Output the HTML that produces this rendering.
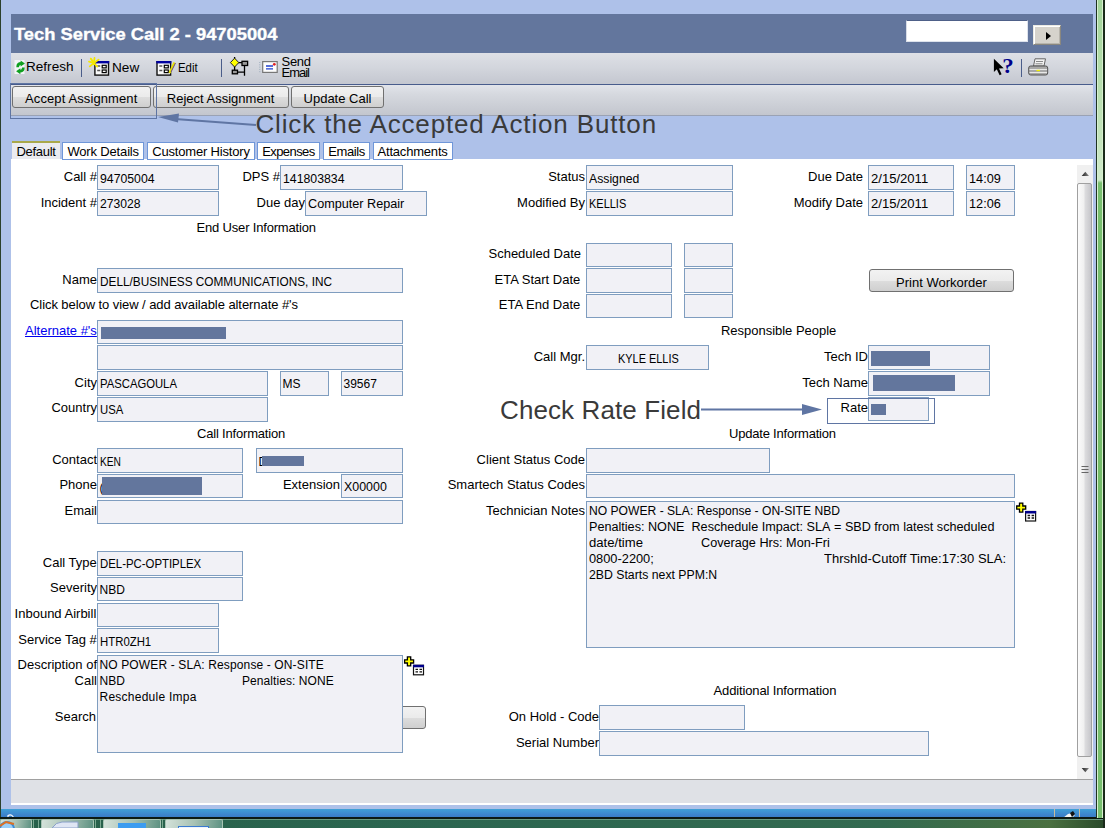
<!DOCTYPE html><html><head><meta charset="utf-8"><style>
html,body{margin:0;padding:0;}
body{width:1105px;height:828px;overflow:hidden;position:relative;background:#aec1e9;font-family:"Liberation Sans",sans-serif;}
</style></head><body>
<div style="position:absolute;left:0px;top:0px;width:1px;height:818px;background:#2b3f2b;"></div>
<div style="position:absolute;left:11px;top:14px;width:1082px;height:39px;background:#63769d;"></div>
<div style="position:absolute;left:14.00px;top:25.11px;line-height:20px;font-size:17px;font-family:'Liberation Sans',sans-serif;font-weight:bold;color:#fff;white-space:pre;letter-spacing:0.000px;transform:scaleX(1.0779);transform-origin:0 0;-webkit-text-stroke:0.35px #fff;">Tech Service Call 2 - 94705004</div>
<div style="position:absolute;left:906px;top:20px;width:122px;height:22px;box-sizing:border-box;background:#fff;border:1px solid #dde2ec;border-top-color:#4e6088;border-left-color:#d8dce6;"></div>
<div style="position:absolute;left:1033px;top:25px;width:28px;height:20px;box-sizing:border-box;background:#d6d3cc;border:1px solid #ecebe4;border-right-color:#8a877f;border-bottom-color:#8a877f;box-shadow:inset 1px 1px 0 #fff, inset -1px -1px 0 #b8b5ad;"></div>
<div style="position:absolute;left:1046px;top:32px;width:0;height:0;border-top:4px solid transparent;border-bottom:4px solid transparent;border-left:5px solid #000;"></div>
<div style="position:absolute;left:11px;top:53px;width:1082px;height:31px;background:linear-gradient(#dee0e6,#d2d5dc 50%,#c4c7d0);"></div>
<div style="position:absolute;left:11px;top:84px;width:1082px;height:1px;background:#485c8c;"></div>
<div style="position:absolute;left:11px;top:85px;width:1082px;height:30px;background:linear-gradient(#e2e4ea,#d6d9df 30%,#c3c6ce);"></div>
<div style="position:absolute;left:11px;top:115px;width:1082px;height:1px;background:#9aa2b4;"></div>
<div style="position:absolute;left:12px;top:86px;width:139px;height:22px;box-sizing:border-box;border:1px solid #707070;border-radius:3px;background:linear-gradient(#f2f2f2 0%,#ebebeb 50%,#dddddd 51%,#cfcfcf 100%);"></div>
<div style="position:absolute;left:25.00px;top:90.50px;line-height:16px;font-size:13px;font-family:'Liberation Sans',sans-serif;font-weight:normal;color:#000;white-space:pre;letter-spacing:0.108px;">Accept Assignment</div>
<div style="position:absolute;left:153px;top:86px;width:136px;height:22px;box-sizing:border-box;border:1px solid #707070;border-radius:3px;background:linear-gradient(#f2f2f2 0%,#ebebeb 50%,#dddddd 51%,#cfcfcf 100%);"></div>
<div style="position:absolute;left:166.81px;top:90.50px;line-height:16px;font-size:13px;font-family:'Liberation Sans',sans-serif;font-weight:normal;color:#000;white-space:pre;letter-spacing:0.000px;">Reject Assignment</div>
<div style="position:absolute;left:291px;top:86px;width:93px;height:22px;box-sizing:border-box;border:1px solid #707070;border-radius:3px;background:linear-gradient(#f2f2f2 0%,#ebebeb 50%,#dddddd 51%,#cfcfcf 100%);"></div>
<div style="position:absolute;left:303.54px;top:90.50px;line-height:16px;font-size:13px;font-family:'Liberation Sans',sans-serif;font-weight:normal;color:#000;white-space:pre;letter-spacing:0.000px;">Update Call</div>
<div style="position:absolute;left:10px;top:83px;width:147px;height:36px;box-sizing:border-box;border:1px solid #5f75a3;"></div>
<div style="position:absolute;left:255.50px;top:109.49px;line-height:31px;font-size:26px;font-family:'Liberation Sans',sans-serif;font-weight:normal;color:#3a3a3a;white-space:pre;letter-spacing:0.848px;">Click the Accepted Action Button</div>
<div style="position:absolute;left:12px;top:141px;width:48px;height:18px;box-sizing:border-box;border-top:2px solid #a9a84a;background:#ebebf0;"></div>
<div style="position:absolute;left:16.50px;top:143.50px;line-height:16px;font-size:13px;font-family:'Liberation Sans',sans-serif;font-weight:normal;color:#000;white-space:pre;letter-spacing:-0.298px;">Default</div>
<div style="position:absolute;left:11px;top:159px;width:1082px;height:620px;background:#fff;"></div>
<div style="position:absolute;left:62px;top:142px;width:82px;height:18px;box-sizing:border-box;border:1px solid #6f96d8;background:#fff;"></div>
<div style="position:absolute;left:67.40px;top:143.50px;line-height:16px;font-size:13px;font-family:'Liberation Sans',sans-serif;font-weight:normal;color:#000;white-space:pre;letter-spacing:-0.158px;">Work Details</div>
<div style="position:absolute;left:147px;top:142px;width:107.5px;height:18px;box-sizing:border-box;border:1px solid #6f96d8;background:#fff;"></div>
<div style="position:absolute;left:152.20px;top:143.50px;line-height:16px;font-size:13px;font-family:'Liberation Sans',sans-serif;font-weight:normal;color:#000;white-space:pre;letter-spacing:-0.174px;">Customer History</div>
<div style="position:absolute;left:257px;top:142px;width:63px;height:18px;box-sizing:border-box;border:1px solid #6f96d8;background:#fff;"></div>
<div style="position:absolute;left:262.20px;top:143.50px;line-height:16px;font-size:13px;font-family:'Liberation Sans',sans-serif;font-weight:normal;color:#000;white-space:pre;letter-spacing:-0.584px;">Expenses</div>
<div style="position:absolute;left:323px;top:142px;width:47px;height:18px;box-sizing:border-box;border:1px solid #6f96d8;background:#fff;"></div>
<div style="position:absolute;left:328.20px;top:143.50px;line-height:16px;font-size:13px;font-family:'Liberation Sans',sans-serif;font-weight:normal;color:#000;white-space:pre;letter-spacing:-0.381px;">Emails</div>
<div style="position:absolute;left:372.5px;top:142px;width:80.5px;height:18px;box-sizing:border-box;border:1px solid #6f96d8;background:#fff;"></div>
<div style="position:absolute;left:377.50px;top:143.50px;line-height:16px;font-size:13px;font-family:'Liberation Sans',sans-serif;font-weight:normal;color:#000;white-space:pre;letter-spacing:-0.196px;">Attachments</div>
<div style="position:absolute;left:1077px;top:165px;width:16px;height:614px;background:#f0f0f0;"></div>
<div style="position:absolute;left:1077px;top:183px;width:15px;height:574px;box-sizing:border-box;border:1px solid #a0a0a0;border-radius:2px;background:linear-gradient(90deg,#fbfbfb,#f0f0f0 45%,#dcdcde 55%,#c6c6ca);"></div>
<svg style="position:absolute;left:0;top:0" width="1105" height="828"><defs><linearGradient id="ag" x1="0" x2="1"><stop offset="0" stop-color="#222"/><stop offset="1" stop-color="#888"/></linearGradient></defs><path d="M1081.7 176 L1085.3 171.8 L1089 176 Z" fill="url(#ag)"/><path d="M1081.7 768 L1085.3 772.2 L1089 768 Z" fill="url(#ag)"/><path d="M1081.5 466.5 H1088.5 M1081.5 469.5 H1088.5 M1081.5 472.5 H1088.5" stroke="#666" stroke-width="1.2"/></svg>
<div style="position:absolute;left:11px;top:779px;width:1082px;height:1px;background:#a0a0a0;"></div>
<div style="position:absolute;left:11px;top:780px;width:1082px;height:23px;background:#dfe1e6;"></div>
<div style="position:absolute;left:11px;top:803px;width:1082px;height:2px;background:#fff;"></div>
<div style="position:absolute;left:1px;top:809px;width:1095px;height:9px;background:linear-gradient(#40a0d6,#3c86cc 60%,#3a78c2);"></div>
<div style="position:absolute;left:1054px;top:809px;width:1px;height:9px;background:#c8bc9c;"></div>
<div style="position:absolute;left:1079px;top:809px;width:1px;height:9px;background:#c8bc9c;"></div>
<svg style="position:absolute;left:0;top:0" width="1105" height="828"><path d="M1063 818 L1068 814 L1072 813 L1075 815 L1072 818 Z" fill="#f4f4f4"/><path d="M1070 813 L1073 811 L1075 814 L1072 817 Z" fill="#111"/><path d="M8 818 V815.5 Q11 814 13 816.5 V818" stroke="#fff" stroke-width="1.2" fill="none"/></svg>
<div style="position:absolute;left:0px;top:817px;width:1105px;height:2px;background:#0c1a12;"></div>
<div style="position:absolute;left:0px;top:819px;width:1105px;height:9px;background:linear-gradient(90deg,#27604a,#2c6650 40%,#336a50 80%,#4a7040 95%,#2a4a2a);"></div>
<div style="position:absolute;left:0px;top:819px;width:1105px;height:1px;background:#6a9a80;"></div>
<div style="position:absolute;left:0px;top:819px;width:32px;height:9px;box-sizing:border-box;border:1px solid #a8c4b4;border-bottom:none;border-radius:2px 2px 0 0;background:linear-gradient(100deg,#d4e2da,#a8c2b4 50%,#5e9282);"></div>
<div style="position:absolute;left:41px;top:819px;width:53px;height:9px;box-sizing:border-box;border:1px solid #a8c4b4;border-bottom:none;border-radius:2px 2px 0 0;background:linear-gradient(100deg,#d4e2da,#a8c2b4 50%,#5e9282);"></div>
<div style="position:absolute;left:103px;top:819px;width:58px;height:9px;box-sizing:border-box;border:1px solid #a8c4b4;border-bottom:none;border-radius:2px 2px 0 0;background:linear-gradient(100deg,#d4e2da,#a8c2b4 50%,#5e9282);"></div>
<div style="position:absolute;left:165px;top:819px;width:58px;height:9px;box-sizing:border-box;border:1px solid #a8c4b4;border-bottom:none;border-radius:2px 2px 0 0;background:linear-gradient(100deg,#d4e2da,#a8c2b4 50%,#5e9282);"></div>
<div style="position:absolute;left:33px;top:819px;width:1px;height:9px;background:#7aa890;"></div>
<div style="position:absolute;left:38px;top:819px;width:1px;height:9px;background:#7aa890;"></div>
<div style="position:absolute;left:95px;top:819px;width:1px;height:9px;background:#7aa890;"></div>
<div style="position:absolute;left:100px;top:819px;width:1px;height:9px;background:#7aa890;"></div>
<div style="position:absolute;left:162px;top:819px;width:1px;height:9px;background:#7aa890;"></div>
<svg style="position:absolute;left:0;top:0" width="1105" height="828"><circle cx="7" cy="829" r="8" fill="#3a8ad8"/><circle cx="7" cy="829" r="6" fill="#9ad0f8"/><path d="M0 826 L6 822 L14 824" stroke="#e07020" stroke-width="2" fill="none"/><path d="M52 828 Q56 822 62 822 H78 V828 Z" fill="#dfe6f4" stroke="#8aa0c8" stroke-width="1"/><rect x="118" y="823" width="28" height="6" fill="#3c9cf0"/><rect x="178.5" y="826.5" width="30" height="3" fill="#eef4fa" stroke="#3a7ad0" stroke-width="1"/></svg>
<div style="position:absolute;left:1096px;top:0px;width:1px;height:818px;background:#1d3320;"></div>
<div style="position:absolute;left:1097px;top:0px;width:1px;height:818px;background:#d8f0d0;"></div>
<div style="position:absolute;left:1098px;top:0px;width:4px;height:818px;background:linear-gradient(#a2d49a,#c4e4bc 140px,#d0eacb 180px,#78c070 183px,#74bc6a 60%,#78c070);"></div>
<div style="position:absolute;left:1102px;top:0px;width:1px;height:818px;background:#d8f0d0;"></div>
<div style="position:absolute;left:1103px;top:0px;width:2px;height:828px;background:#1a2a1a;"></div>
<div style="position:absolute;left:63.76px;top:168.50px;line-height:16px;font-size:13px;font-family:'Liberation Sans',sans-serif;font-weight:normal;color:#000;white-space:pre;letter-spacing:0.000px;">Call #</div>
<div style="position:absolute;left:97px;top:165px;width:122px;height:25px;box-sizing:border-box;border:1px solid #7f9dbf;background:#f1f1f6;"></div>
<div style="position:absolute;left:99.50px;top:171.84px;line-height:14px;font-size:12px;font-family:'Liberation Sans',sans-serif;font-weight:normal;color:#000;white-space:pre;letter-spacing:0.000px;transform:scaleX(1.0208);transform-origin:0 0;">94705004</div>
<div style="position:absolute;left:40.63px;top:194.50px;line-height:16px;font-size:13px;font-family:'Liberation Sans',sans-serif;font-weight:normal;color:#000;white-space:pre;letter-spacing:0.000px;">Incident #</div>
<div style="position:absolute;left:97px;top:191px;width:122px;height:25px;box-sizing:border-box;border:1px solid #7f9dbf;background:#f1f1f6;"></div>
<div style="position:absolute;left:99.50px;top:196.84px;line-height:14px;font-size:12px;font-family:'Liberation Sans',sans-serif;font-weight:normal;color:#000;white-space:pre;letter-spacing:0.000px;transform:scaleX(1.0114);transform-origin:0 0;">273028</div>
<div style="position:absolute;left:242.43px;top:168.50px;line-height:16px;font-size:13px;font-family:'Liberation Sans',sans-serif;font-weight:normal;color:#000;white-space:pre;letter-spacing:0.000px;">DPS #</div>
<div style="position:absolute;left:280px;top:165px;width:123px;height:25px;box-sizing:border-box;border:1px solid #7f9dbf;background:#f1f1f6;"></div>
<div style="position:absolute;left:282.50px;top:171.84px;line-height:14px;font-size:12px;font-family:'Liberation Sans',sans-serif;font-weight:normal;color:#000;white-space:pre;letter-spacing:0.000px;transform:scaleX(1.0239);transform-origin:0 0;">141803834</div>
<div style="position:absolute;left:256.58px;top:194.50px;line-height:16px;font-size:13px;font-family:'Liberation Sans',sans-serif;font-weight:normal;color:#000;white-space:pre;letter-spacing:0.000px;">Due day</div>
<div style="position:absolute;left:305px;top:191px;width:122px;height:25px;box-sizing:border-box;border:1px solid #7f9dbf;background:#f1f1f6;"></div>
<div style="position:absolute;left:307.50px;top:196.84px;line-height:14px;font-size:12px;font-family:'Liberation Sans',sans-serif;font-weight:normal;color:#000;white-space:pre;letter-spacing:0.000px;transform:scaleX(1.0539);transform-origin:0 0;">Computer Repair</div>
<div style="position:absolute;left:196.50px;top:219.50px;line-height:16px;font-size:13px;font-family:'Liberation Sans',sans-serif;font-weight:normal;color:#000;white-space:pre;letter-spacing:-0.175px;">End User Information</div>
<div style="position:absolute;left:62.32px;top:271.50px;line-height:16px;font-size:13px;font-family:'Liberation Sans',sans-serif;font-weight:normal;color:#000;white-space:pre;letter-spacing:0.000px;">Name</div>
<div style="position:absolute;left:97px;top:268px;width:306px;height:25px;box-sizing:border-box;border:1px solid #7f9dbf;background:#f1f1f6;"></div>
<div style="position:absolute;left:99.50px;top:274.84px;line-height:14px;font-size:12px;font-family:'Liberation Sans',sans-serif;font-weight:normal;color:#000;white-space:pre;letter-spacing:0.000px;transform:scaleX(0.9838);transform-origin:0 0;">DELL/BUSINESS COMMUNICATIONS, INC</div>
<div style="position:absolute;left:30.00px;top:296.50px;line-height:16px;font-size:13px;font-family:'Liberation Sans',sans-serif;font-weight:normal;color:#000;white-space:pre;letter-spacing:-0.069px;">Click below to view / add available alternate #'s</div>
<div style="position:absolute;left:25.00px;top:322.50px;line-height:16px;font-size:13px;font-family:'Liberation Sans',sans-serif;font-weight:normal;color:#0000ee;white-space:pre;letter-spacing:0.000px;text-decoration:underline;">Alternate #'s</div>
<div style="position:absolute;left:97px;top:320px;width:306px;height:24px;box-sizing:border-box;border:1px solid #7f9dbf;background:#f1f1f6;"></div>
<div style="position:absolute;left:100.5px;top:327px;width:125.5px;height:12px;background:#63769d;"></div>
<div style="position:absolute;left:97px;top:345px;width:306px;height:25px;box-sizing:border-box;border:1px solid #7f9dbf;background:#f1f1f6;"></div>
<div style="position:absolute;left:74.61px;top:374.50px;line-height:16px;font-size:13px;font-family:'Liberation Sans',sans-serif;font-weight:normal;color:#000;white-space:pre;letter-spacing:0.000px;">City</div>
<div style="position:absolute;left:97px;top:371px;width:171px;height:25px;box-sizing:border-box;border:1px solid #7f9dbf;background:#f1f1f6;"></div>
<div style="position:absolute;left:99.50px;top:376.84px;line-height:14px;font-size:12px;font-family:'Liberation Sans',sans-serif;font-weight:normal;color:#000;white-space:pre;letter-spacing:0.000px;transform:scaleX(0.9401);transform-origin:0 0;">PASCAGOULA</div>
<div style="position:absolute;left:280px;top:371px;width:49px;height:25px;box-sizing:border-box;border:1px solid #7f9dbf;background:#f1f1f6;"></div>
<div style="position:absolute;left:282.50px;top:376.84px;line-height:14px;font-size:12px;font-family:'Liberation Sans',sans-serif;font-weight:normal;color:#000;white-space:pre;letter-spacing:0.000px;">MS</div>
<div style="position:absolute;left:341px;top:371px;width:62px;height:25px;box-sizing:border-box;border:1px solid #7f9dbf;background:#f1f1f6;"></div>
<div style="position:absolute;left:343.50px;top:376.84px;line-height:14px;font-size:12px;font-family:'Liberation Sans',sans-serif;font-weight:normal;color:#000;white-space:pre;letter-spacing:0.000px;">39567</div>
<div style="position:absolute;left:51.48px;top:399.50px;line-height:16px;font-size:13px;font-family:'Liberation Sans',sans-serif;font-weight:normal;color:#000;white-space:pre;letter-spacing:0.000px;">Country</div>
<div style="position:absolute;left:97px;top:397px;width:171px;height:25px;box-sizing:border-box;border:1px solid #7f9dbf;background:#f1f1f6;"></div>
<div style="position:absolute;left:99.50px;top:402.84px;line-height:14px;font-size:12px;font-family:'Liberation Sans',sans-serif;font-weight:normal;color:#000;white-space:pre;letter-spacing:0.000px;transform:scaleX(0.9443);transform-origin:0 0;">USA</div>
<div style="position:absolute;left:197.00px;top:425.50px;line-height:16px;font-size:13px;font-family:'Liberation Sans',sans-serif;font-weight:normal;color:#000;white-space:pre;letter-spacing:-0.189px;">Call Information</div>
<div style="position:absolute;left:52.20px;top:451.50px;line-height:16px;font-size:13px;font-family:'Liberation Sans',sans-serif;font-weight:normal;color:#000;white-space:pre;letter-spacing:0.000px;">Contact</div>
<div style="position:absolute;left:97px;top:448px;width:146px;height:25px;box-sizing:border-box;border:1px solid #7f9dbf;background:#f1f1f6;"></div>
<div style="position:absolute;left:99.50px;top:454.84px;line-height:14px;font-size:12px;font-family:'Liberation Sans',sans-serif;font-weight:normal;color:#000;white-space:pre;letter-spacing:0.000px;transform:scaleX(0.8511);transform-origin:0 0;">KEN</div>
<div style="position:absolute;left:256px;top:448px;width:147px;height:25px;box-sizing:border-box;border:1px solid #7f9dbf;background:#f1f1f6;"></div>
<div style="position:absolute;left:258.50px;top:454.84px;line-height:14px;font-size:12px;font-family:'Liberation Sans',sans-serif;font-weight:normal;color:#000;white-space:pre;letter-spacing:0.000px;">D</div>
<div style="position:absolute;left:261.5px;top:456px;width:42.5px;height:10px;background:#63769d;"></div>
<div style="position:absolute;left:59.41px;top:476.50px;line-height:16px;font-size:13px;font-family:'Liberation Sans',sans-serif;font-weight:normal;color:#000;white-space:pre;letter-spacing:0.000px;">Phone</div>
<div style="position:absolute;left:97px;top:474px;width:146px;height:24px;box-sizing:border-box;border:1px solid #7f9dbf;background:#f1f1f6;"></div>
<div style="position:absolute;left:99.50px;top:480.84px;line-height:14px;font-size:12px;font-family:'Liberation Sans',sans-serif;font-weight:normal;color:#000;white-space:pre;letter-spacing:0.000px;">(</div>
<div style="position:absolute;left:102px;top:477px;width:100px;height:18px;background:#63769d;"></div>
<div style="position:absolute;left:282.91px;top:476.50px;line-height:16px;font-size:13px;font-family:'Liberation Sans',sans-serif;font-weight:normal;color:#000;white-space:pre;letter-spacing:0.000px;">Extension</div>
<div style="position:absolute;left:341px;top:474px;width:62px;height:24px;box-sizing:border-box;border:1px solid #7f9dbf;background:#f1f1f6;"></div>
<div style="position:absolute;left:343.50px;top:479.84px;line-height:14px;font-size:12px;font-family:'Liberation Sans',sans-serif;font-weight:normal;color:#000;white-space:pre;letter-spacing:0.000px;transform:scaleX(1.0345);transform-origin:0 0;">X00000</div>
<div style="position:absolute;left:64.49px;top:502.50px;line-height:16px;font-size:13px;font-family:'Liberation Sans',sans-serif;font-weight:normal;color:#000;white-space:pre;letter-spacing:0.000px;">Email</div>
<div style="position:absolute;left:97px;top:500px;width:306px;height:24px;box-sizing:border-box;border:1px solid #7f9dbf;background:#f1f1f6;"></div>
<div style="position:absolute;left:42.81px;top:554.50px;line-height:16px;font-size:13px;font-family:'Liberation Sans',sans-serif;font-weight:normal;color:#000;white-space:pre;letter-spacing:0.000px;">Call Type</div>
<div style="position:absolute;left:97px;top:551px;width:146px;height:25px;box-sizing:border-box;border:1px solid #7f9dbf;background:#f1f1f6;"></div>
<div style="position:absolute;left:99.50px;top:556.84px;line-height:14px;font-size:12px;font-family:'Liberation Sans',sans-serif;font-weight:normal;color:#000;white-space:pre;letter-spacing:0.000px;transform:scaleX(0.9485);transform-origin:0 0;">DEL-PC-OPTIPLEX</div>
<div style="position:absolute;left:50.04px;top:579.50px;line-height:16px;font-size:13px;font-family:'Liberation Sans',sans-serif;font-weight:normal;color:#000;white-space:pre;letter-spacing:0.000px;">Severity</div>
<div style="position:absolute;left:97px;top:577px;width:146px;height:24px;box-sizing:border-box;border:1px solid #7f9dbf;background:#f1f1f6;"></div>
<div style="position:absolute;left:99.50px;top:582.84px;line-height:14px;font-size:12px;font-family:'Liberation Sans',sans-serif;font-weight:normal;color:#000;white-space:pre;letter-spacing:0.000px;">NBD</div>
<div style="position:absolute;left:14.61px;top:605.50px;line-height:16px;font-size:13px;font-family:'Liberation Sans',sans-serif;font-weight:normal;color:#000;white-space:pre;letter-spacing:0.000px;">Inbound Airbill</div>
<div style="position:absolute;left:97px;top:603px;width:122px;height:24px;box-sizing:border-box;border:1px solid #7f9dbf;background:#f1f1f6;"></div>
<div style="position:absolute;left:18.24px;top:631.50px;line-height:16px;font-size:13px;font-family:'Liberation Sans',sans-serif;font-weight:normal;color:#000;white-space:pre;letter-spacing:0.000px;">Service Tag #</div>
<div style="position:absolute;left:97px;top:628px;width:122px;height:25px;box-sizing:border-box;border:1px solid #7f9dbf;background:#f1f1f6;"></div>
<div style="position:absolute;left:99.50px;top:634.84px;line-height:14px;font-size:12px;font-family:'Liberation Sans',sans-serif;font-weight:normal;color:#000;white-space:pre;letter-spacing:0.000px;transform:scaleX(0.9480);transform-origin:0 0;">HTR0ZH1</div>
<div style="position:absolute;left:380px;top:706px;width:46px;height:23px;box-sizing:border-box;border:1px solid #707070;border-radius:3px;background:linear-gradient(#f2f2f2 0%,#ebebeb 50%,#dddddd 51%,#cfcfcf 100%);"></div>
<div style="position:absolute;left:403.00px;top:710.50px;line-height:16px;font-size:13px;font-family:'Liberation Sans',sans-serif;font-weight:normal;color:#000;white-space:pre;letter-spacing:0.000px;"></div>
<div style="position:absolute;left:97px;top:655px;width:306px;height:98px;box-sizing:border-box;border:1px solid #7f9dbf;background:#f1f1f6;"></div>
<div style="position:absolute;left:99.50px;top:657.84px;line-height:14px;font-size:12px;font-family:'Liberation Sans',sans-serif;font-weight:normal;color:#000;white-space:pre;letter-spacing:0.129px;">NO POWER - SLA: Response - ON-SITE</div>
<div style="position:absolute;left:99.50px;top:673.84px;line-height:14px;font-size:12px;font-family:'Liberation Sans',sans-serif;font-weight:normal;color:#000;white-space:pre;letter-spacing:0.000px;">NBD</div>
<div style="position:absolute;left:242.00px;top:673.84px;line-height:14px;font-size:12px;font-family:'Liberation Sans',sans-serif;font-weight:normal;color:#000;white-space:pre;letter-spacing:0.071px;">Penalties: NONE</div>
<div style="position:absolute;left:99.50px;top:689.84px;line-height:14px;font-size:12px;font-family:'Liberation Sans',sans-serif;font-weight:normal;color:#000;white-space:pre;letter-spacing:0.244px;">Reschedule Impa</div>
<div style="position:absolute;left:17.52px;top:656.50px;line-height:16px;font-size:13px;font-family:'Liberation Sans',sans-serif;font-weight:normal;color:#000;white-space:pre;letter-spacing:0.000px;">Description of</div>
<div style="position:absolute;left:74.61px;top:672.50px;line-height:16px;font-size:13px;font-family:'Liberation Sans',sans-serif;font-weight:normal;color:#000;white-space:pre;letter-spacing:0.000px;">Call</div>
<div style="position:absolute;left:54.81px;top:708.50px;line-height:16px;font-size:13px;font-family:'Liberation Sans',sans-serif;font-weight:normal;color:#000;white-space:pre;letter-spacing:0.000px;">Search</div>
<div style="position:absolute;left:548.15px;top:168.50px;line-height:16px;font-size:13px;font-family:'Liberation Sans',sans-serif;font-weight:normal;color:#000;white-space:pre;letter-spacing:0.000px;">Status</div>
<div style="position:absolute;left:586px;top:165px;width:147px;height:25px;box-sizing:border-box;border:1px solid #7f9dbf;background:#f1f1f6;"></div>
<div style="position:absolute;left:588.50px;top:171.84px;line-height:14px;font-size:12px;font-family:'Liberation Sans',sans-serif;font-weight:normal;color:#000;white-space:pre;letter-spacing:0.000px;transform:scaleX(1.0189);transform-origin:0 0;">Assigned</div>
<div style="position:absolute;left:517.08px;top:194.50px;line-height:16px;font-size:13px;font-family:'Liberation Sans',sans-serif;font-weight:normal;color:#000;white-space:pre;letter-spacing:0.000px;">Modified By</div>
<div style="position:absolute;left:586px;top:191px;width:147px;height:25px;box-sizing:border-box;border:1px solid #7f9dbf;background:#f1f1f6;"></div>
<div style="position:absolute;left:588.50px;top:196.84px;line-height:14px;font-size:12px;font-family:'Liberation Sans',sans-serif;font-weight:normal;color:#000;white-space:pre;letter-spacing:0.000px;transform:scaleX(0.9142);transform-origin:0 0;">KELLIS</div>
<div style="position:absolute;left:808.08px;top:168.50px;line-height:16px;font-size:13px;font-family:'Liberation Sans',sans-serif;font-weight:normal;color:#000;white-space:pre;letter-spacing:0.000px;">Due Date</div>
<div style="position:absolute;left:868px;top:165px;width:86px;height:25px;box-sizing:border-box;border:1px solid #7f9dbf;background:#f1f1f6;"></div>
<div style="position:absolute;left:870.50px;top:171.84px;line-height:14px;font-size:12px;font-family:'Liberation Sans',sans-serif;font-weight:normal;color:#000;white-space:pre;letter-spacing:0.000px;transform:scaleX(1.0896);transform-origin:0 0;">2/15/2011</div>
<div style="position:absolute;left:966px;top:165px;width:49px;height:25px;box-sizing:border-box;border:1px solid #7f9dbf;background:#f1f1f6;"></div>
<div style="position:absolute;left:968.50px;top:171.84px;line-height:14px;font-size:12px;font-family:'Liberation Sans',sans-serif;font-weight:normal;color:#000;white-space:pre;letter-spacing:0.000px;transform:scaleX(1.0590);transform-origin:0 0;">14:09</div>
<div style="position:absolute;left:793.64px;top:194.50px;line-height:16px;font-size:13px;font-family:'Liberation Sans',sans-serif;font-weight:normal;color:#000;white-space:pre;letter-spacing:0.000px;">Modify Date</div>
<div style="position:absolute;left:868px;top:191px;width:86px;height:25px;box-sizing:border-box;border:1px solid #7f9dbf;background:#f1f1f6;"></div>
<div style="position:absolute;left:870.50px;top:196.84px;line-height:14px;font-size:12px;font-family:'Liberation Sans',sans-serif;font-weight:normal;color:#000;white-space:pre;letter-spacing:0.000px;transform:scaleX(1.0896);transform-origin:0 0;">2/15/2011</div>
<div style="position:absolute;left:966px;top:191px;width:49px;height:25px;box-sizing:border-box;border:1px solid #7f9dbf;background:#f1f1f6;"></div>
<div style="position:absolute;left:968.50px;top:196.84px;line-height:14px;font-size:12px;font-family:'Liberation Sans',sans-serif;font-weight:normal;color:#000;white-space:pre;letter-spacing:0.000px;transform:scaleX(1.0590);transform-origin:0 0;">12:06</div>
<div style="position:absolute;left:488.49px;top:245.50px;line-height:16px;font-size:13px;font-family:'Liberation Sans',sans-serif;font-weight:normal;color:#000;white-space:pre;letter-spacing:0.000px;">Scheduled Date</div>
<div style="position:absolute;left:586px;top:243px;width:86px;height:24px;box-sizing:border-box;border:1px solid #7f9dbf;background:#f1f1f6;"></div>
<div style="position:absolute;left:684px;top:243px;width:49px;height:24px;box-sizing:border-box;border:1px solid #7f9dbf;background:#f1f1f6;"></div>
<div style="position:absolute;left:494.54px;top:271.50px;line-height:16px;font-size:13px;font-family:'Liberation Sans',sans-serif;font-weight:normal;color:#000;white-space:pre;letter-spacing:0.000px;">ETA Start Date</div>
<div style="position:absolute;left:586px;top:268px;width:86px;height:25px;box-sizing:border-box;border:1px solid #7f9dbf;background:#f1f1f6;"></div>
<div style="position:absolute;left:684px;top:268px;width:49px;height:25px;box-sizing:border-box;border:1px solid #7f9dbf;background:#f1f1f6;"></div>
<div style="position:absolute;left:498.87px;top:296.50px;line-height:16px;font-size:13px;font-family:'Liberation Sans',sans-serif;font-weight:normal;color:#000;white-space:pre;letter-spacing:0.000px;">ETA End Date</div>
<div style="position:absolute;left:586px;top:294px;width:86px;height:24px;box-sizing:border-box;border:1px solid #7f9dbf;background:#f1f1f6;"></div>
<div style="position:absolute;left:684px;top:294px;width:49px;height:24px;box-sizing:border-box;border:1px solid #7f9dbf;background:#f1f1f6;"></div>
<div style="position:absolute;left:869px;top:269px;width:145px;height:23px;box-sizing:border-box;border:1px solid #707070;border-radius:3px;background:linear-gradient(#f2f2f2 0%,#ebebeb 50%,#dddddd 51%,#cfcfcf 100%);"></div>
<div style="position:absolute;left:896.11px;top:274.50px;line-height:16px;font-size:13px;font-family:'Liberation Sans',sans-serif;font-weight:normal;color:#000;white-space:pre;letter-spacing:0.000px;">Print Workorder</div>
<div style="position:absolute;left:721.00px;top:322.50px;line-height:16px;font-size:13px;font-family:'Liberation Sans',sans-serif;font-weight:normal;color:#000;white-space:pre;letter-spacing:-0.020px;">Responsible People</div>
<div style="position:absolute;left:533.71px;top:348.50px;line-height:16px;font-size:13px;font-family:'Liberation Sans',sans-serif;font-weight:normal;color:#000;white-space:pre;letter-spacing:0.000px;">Call Mgr.</div>
<div style="position:absolute;left:586px;top:345px;width:123px;height:25px;box-sizing:border-box;border:1px solid #7f9dbf;background:#f1f1f6;"></div>
<div style="position:absolute;left:617.70px;top:351.84px;line-height:14px;font-size:12px;font-family:'Liberation Sans',sans-serif;font-weight:normal;color:#000;white-space:pre;letter-spacing:0.000px;transform:scaleX(0.9099);transform-origin:0 0;">KYLE ELLIS</div>
<div style="position:absolute;left:823.93px;top:348.50px;line-height:16px;font-size:13px;font-family:'Liberation Sans',sans-serif;font-weight:normal;color:#000;white-space:pre;letter-spacing:0.000px;">Tech ID</div>
<div style="position:absolute;left:868px;top:345px;width:122px;height:25px;box-sizing:border-box;border:1px solid #7f9dbf;background:#f1f1f6;"></div>
<div style="position:absolute;left:870.5px;top:351px;width:59.0px;height:15px;background:#63769d;"></div>
<div style="position:absolute;left:802.25px;top:374.50px;line-height:16px;font-size:13px;font-family:'Liberation Sans',sans-serif;font-weight:normal;color:#000;white-space:pre;letter-spacing:0.000px;">Tech Name</div>
<div style="position:absolute;left:868px;top:371px;width:122px;height:25px;box-sizing:border-box;border:1px solid #7f9dbf;background:#f1f1f6;"></div>
<div style="position:absolute;left:872.5px;top:375px;width:82.5px;height:16px;background:#63769d;"></div>
<div style="position:absolute;left:840.54px;top:399.50px;line-height:16px;font-size:13px;font-family:'Liberation Sans',sans-serif;font-weight:normal;color:#000;white-space:pre;letter-spacing:0.000px;">Rate</div>
<div style="position:absolute;left:868px;top:397px;width:61px;height:24px;box-sizing:border-box;border:1px solid #7f9dbf;background:#f1f1f6;"></div>
<div style="position:absolute;left:870.5px;top:404px;width:15.5px;height:11px;background:#63769d;"></div>
<div style="position:absolute;left:827px;top:398px;width:108px;height:26px;box-sizing:border-box;border:1px solid #5f75a3;"></div>
<div style="position:absolute;left:500.00px;top:395.49px;line-height:31px;font-size:26px;font-family:'Liberation Sans',sans-serif;font-weight:normal;color:#3a3a3a;white-space:pre;letter-spacing:0.105px;">Check Rate Field</div>
<div style="position:absolute;left:729.00px;top:425.50px;line-height:16px;font-size:13px;font-family:'Liberation Sans',sans-serif;font-weight:normal;color:#000;white-space:pre;letter-spacing:-0.210px;">Update Information</div>
<div style="position:absolute;left:476.61px;top:451.50px;line-height:16px;font-size:13px;font-family:'Liberation Sans',sans-serif;font-weight:normal;color:#000;white-space:pre;letter-spacing:0.000px;">Client Status Code</div>
<div style="position:absolute;left:586px;top:448px;width:184px;height:25px;box-sizing:border-box;border:1px solid #7f9dbf;background:#f1f1f6;"></div>
<div style="position:absolute;left:447.71px;top:476.50px;line-height:16px;font-size:13px;font-family:'Liberation Sans',sans-serif;font-weight:normal;color:#000;white-space:pre;letter-spacing:0.000px;">Smartech Status Codes</div>
<div style="position:absolute;left:586px;top:474px;width:429px;height:24px;box-sizing:border-box;border:1px solid #7f9dbf;background:#f1f1f6;"></div>
<div style="position:absolute;left:486.00px;top:502.50px;line-height:16px;font-size:13px;font-family:'Liberation Sans',sans-serif;font-weight:normal;color:#000;white-space:pre;letter-spacing:0.000px;">Technician Notes</div>
<div style="position:absolute;left:586px;top:501px;width:429px;height:147px;box-sizing:border-box;border:1px solid #7f9dbf;background:#f1f1f6;"></div>
<div style="position:absolute;left:589.30px;top:503.84px;line-height:14px;font-size:12px;font-family:'Liberation Sans',sans-serif;font-weight:normal;color:#000;white-space:pre;letter-spacing:0.000px;transform:scaleX(1.0092);transform-origin:0 0;">NO POWER - SLA: Response - ON-SITE NBD</div>
<div style="position:absolute;left:589.30px;top:519.84px;line-height:14px;font-size:12px;font-family:'Liberation Sans',sans-serif;font-weight:normal;color:#000;white-space:pre;letter-spacing:0.000px;transform:scaleX(1.0525);transform-origin:0 0;">Penalties:&nbsp;NONE&nbsp;&nbsp;Reschedule&nbsp;Impact:&nbsp;SLA&nbsp;=&nbsp;SBD&nbsp;from&nbsp;latest&nbsp;scheduled</div>
<div style="position:absolute;left:589.30px;top:535.84px;line-height:14px;font-size:12px;font-family:'Liberation Sans',sans-serif;font-weight:normal;color:#000;white-space:pre;letter-spacing:0.000px;transform:scaleX(1.0940);transform-origin:0 0;">date/time</div>
<div style="position:absolute;left:700.50px;top:535.84px;line-height:14px;font-size:12px;font-family:'Liberation Sans',sans-serif;font-weight:normal;color:#000;white-space:pre;letter-spacing:0.000px;transform:scaleX(1.0547);transform-origin:0 0;">Coverage Hrs: Mon-Fri</div>
<div style="position:absolute;left:589.30px;top:551.84px;line-height:14px;font-size:12px;font-family:'Liberation Sans',sans-serif;font-weight:normal;color:#000;white-space:pre;letter-spacing:0.000px;transform:scaleX(1.0672);transform-origin:0 0;">0800-2200;</div>
<div style="position:absolute;left:823.60px;top:551.84px;line-height:14px;font-size:12px;font-family:'Liberation Sans',sans-serif;font-weight:normal;color:#000;white-space:pre;letter-spacing:0.000px;transform:scaleX(1.0852);transform-origin:0 0;">Thrshld-Cutoff Time:17:30 SLA:</div>
<div style="position:absolute;left:589.30px;top:567.84px;line-height:14px;font-size:12px;font-family:'Liberation Sans',sans-serif;font-weight:normal;color:#000;white-space:pre;letter-spacing:0.000px;transform:scaleX(1.0225);transform-origin:0 0;">2BD Starts next PPM:N</div>
<div style="position:absolute;left:713.60px;top:682.50px;line-height:16px;font-size:13px;font-family:'Liberation Sans',sans-serif;font-weight:normal;color:#000;white-space:pre;letter-spacing:-0.140px;">Additional Information</div>
<div style="position:absolute;left:508.68px;top:708.50px;line-height:16px;font-size:13px;font-family:'Liberation Sans',sans-serif;font-weight:normal;color:#000;white-space:pre;letter-spacing:0.000px;">On Hold - Code</div>
<div style="position:absolute;left:599px;top:705px;width:146px;height:25px;box-sizing:border-box;border:1px solid #7f9dbf;background:#f1f1f6;"></div>
<div style="position:absolute;left:515.92px;top:734.50px;line-height:16px;font-size:13px;font-family:'Liberation Sans',sans-serif;font-weight:normal;color:#000;white-space:pre;letter-spacing:0.000px;">Serial Number</div>
<div style="position:absolute;left:599px;top:731px;width:330px;height:25px;box-sizing:border-box;border:1px solid #7f9dbf;background:#f1f1f6;"></div>
<div style="position:absolute;left:25.50px;top:59.32px;line-height:16px;font-size:13.5px;font-family:'Liberation Sans',sans-serif;font-weight:normal;color:#000;white-space:pre;letter-spacing:0.000px;transform:scaleX(1.0049);transform-origin:0 0;">Refresh</div>
<div style="position:absolute;left:81px;top:59px;width:1px;height:18px;background:#4a5d8a;"></div>
<div style="position:absolute;left:112.30px;top:60.32px;line-height:16px;font-size:13.5px;font-family:'Liberation Sans',sans-serif;font-weight:normal;color:#000;white-space:pre;letter-spacing:0.000px;transform:scaleX(1.0072);transform-origin:0 0;">New</div>
<div style="position:absolute;left:178.20px;top:60.32px;line-height:16px;font-size:13.5px;font-family:'Liberation Sans',sans-serif;font-weight:normal;color:#000;white-space:pre;letter-spacing:0.000px;transform:scaleX(0.8426);transform-origin:0 0;">Edit</div>
<div style="position:absolute;left:221px;top:59px;width:1px;height:18px;background:#4a5d8a;"></div>
<div style="position:absolute;left:281.50px;top:53.50px;line-height:16px;font-size:13px;font-family:'Liberation Sans',sans-serif;font-weight:normal;color:#000;white-space:pre;letter-spacing:-0.287px;">Send</div>
<div style="position:absolute;left:281.50px;top:64.50px;line-height:16px;font-size:13px;font-family:'Liberation Sans',sans-serif;font-weight:normal;color:#000;white-space:pre;letter-spacing:-1.002px;">Email</div>
<div style="position:absolute;left:1021px;top:59px;width:1px;height:18px;background:#4a5d8a;"></div>
<svg style="position:absolute;left:0;top:0" width="1105" height="828"><line x1="256" y1="125" x2="175" y2="119" stroke="#5f75a3" stroke-width="2"/><polygon points="158,117 179,113.5 178,122.5" fill="#5f75a3"/><line x1="701" y1="409.5" x2="805" y2="409.5" stroke="#5f75a3" stroke-width="2"/><polygon points="822,409.5 802,404 802,415" fill="#5f75a3"/></svg>
<svg style="position:absolute;left:0;top:0" width="1105" height="828"><rect x="14.5" y="60" width="10" height="14" fill="#f4f4f8"/><path d="M17.6 67.2 Q17.6 63.4 21.2 63.4" stroke="#10a020" stroke-width="2.6" fill="none"/><path d="M20.6 60.4 L24.9 63.4 L20.6 66.4 Z" fill="#10a020"/><path d="M23.4 67.6 Q23.4 71.3 19.8 71.3" stroke="#10a020" stroke-width="2.6" fill="none"/><path d="M20.4 68.3 L16.1 71.3 L20.4 74.2 Z" fill="#10a020"/><rect x="94.9" y="61.7" width="13.6" height="13.4" fill="#fafafa" stroke="#111" stroke-width="1.4"/><rect x="94.2" y="61" width="15" height="2.4" fill="#0000a0"/><path d="M97.2 66 h3 M97.2 70.5 h3" stroke="#555" stroke-width="1.6"/><rect x="102.2" y="65.3" width="4" height="2.6" fill="none" stroke="#000" stroke-width="1.2"/><rect x="102.2" y="70" width="4" height="2.6" fill="none" stroke="#000" stroke-width="1.2"/><g stroke="#f4e800" stroke-width="1.8" stroke-linecap="round"><path d="M94 63 L90.8 58.6 M94 63 L98.6 59.6 M94 63 L89 61.6 M94 63 L97.2 66.6 M94 63 L89.8 66.4 M94 63 L94.5 58"/></g><rect x="157.0" y="61.7" width="13.6" height="13.4" fill="#fafafa" stroke="#111" stroke-width="1.4"/><rect x="156.3" y="61" width="15" height="2.4" fill="#0000a0"/><path d="M159.3 66 h3 M159.3 70.5 h3" stroke="#555" stroke-width="1.6"/><rect x="164.3" y="65.3" width="4" height="2.6" fill="none" stroke="#000" stroke-width="1.2"/><rect x="164.3" y="70" width="4" height="2.6" fill="none" stroke="#000" stroke-width="1.2"/><path d="M174.5 62.5 L169.5 73" stroke="#e8e000" stroke-width="2.2"/><path d="M175.5 63 L171 72" stroke="#6a4a8a" stroke-width="1"/><path d="M234.6 57 V70 M234.6 62.6 H242 M244.5 65.5 V75.8 M237.5 72.2 H244.5" stroke="#000" stroke-width="1.3" fill="none"/><path d="M234.6 58.2 L238.8 62.6 L234.6 67 L230.4 62.6 Z" fill="#ffff00" stroke="#222" stroke-width="1"/><rect x="232.3" y="70.2" width="5.2" height="3.6" fill="#999" stroke="#000" stroke-width="1.3"/><rect x="242" y="61.3" width="5.6" height="4.2" fill="#999" stroke="#000" stroke-width="1.3"/><rect x="262.7" y="61.6" width="14.5" height="10.8" fill="#fdfdfd" stroke="#777" stroke-width="1.2"/><path d="M266 66 H273 M266 68.8 H273" stroke="#2040d0" stroke-width="1.3"/><circle cx="274.3" cy="64.3" r="1.4" fill="#e02020"/><path d="M259.8 62 V73" stroke="#9ab" stroke-width="1" stroke-dasharray="1 1.3"/><path d="M993.9 58.8 V72 L996.8 69.3 L999.6 75.2 L1001.6 74.2 L999 68.6 L1003.7 68.2 Z" fill="#000"/><text x="1002.3" y="72.6" font-family="Liberation Serif" font-weight="bold" font-size="20" fill="#00008b" transform="translate(1002.3 72.6) scale(1.15 1) translate(-1002.3 -72.6)">?</text><path d="M1033.5 66 L1035 58.8 H1045.5 L1044 66 Z" fill="#f2f2f2" stroke="#666" stroke-width="1"/><path d="M1036 61.5 H1043 M1035.5 63.8 H1042.5" stroke="#888" stroke-width="1"/><rect x="1028.7" y="66" width="19" height="9" rx="2" fill="#a8a8a8" stroke="#555" stroke-width="1"/><path d="M1029.5 69.5 H1047 M1029.5 72.5 H1047" stroke="#e8e8e8" stroke-width="1"/><path d="M1036.5 70.5 H1040" stroke="#f0f000" stroke-width="1.4"/><path d="M1019.5 503.1 h3.3 v2.9 h2.9 v3.2 h-2.9 v2.9 h-3.3 v-2.9 h-2.8 v-3.2 h2.8 z" fill="#ffff00" stroke="#000" stroke-width="1.3"/><rect x="1025.6" y="511.5" width="10" height="9.5" fill="#fff" stroke="#111" stroke-width="1.2"/><rect x="1025.1" y="511.0" width="11" height="2.5" fill="#00008b"/><path d="M1027.6 515.5 h2.5 M1031.6 515.5 h2.5 M1027.6 518.0 h2.5 M1031.6 518.0 h2.5" stroke="#111" stroke-width="1.3"/><path d="M407.4 656.9 h3.3 v2.9 h2.9 v3.2 h-2.9 v2.9 h-3.3 v-2.9 h-2.8 v-3.2 h2.8 z" fill="#ffff00" stroke="#000" stroke-width="1.3"/><rect x="413.5" y="665.3" width="10" height="9.5" fill="#fff" stroke="#111" stroke-width="1.2"/><rect x="413" y="664.8" width="11" height="2.5" fill="#00008b"/><path d="M415.5 669.3 h2.5 M419.5 669.3 h2.5 M415.5 671.8 h2.5 M419.5 671.8 h2.5" stroke="#111" stroke-width="1.3"/></svg>
</body></html>
